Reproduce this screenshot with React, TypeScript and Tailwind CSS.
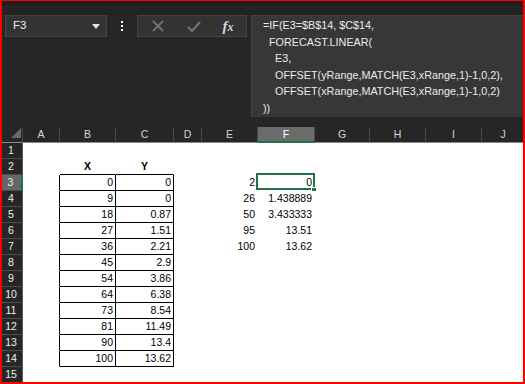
import React from "react";

const COLS = ["A", "B", "C", "D", "E", "F", "G", "H", "I", "J"];
const B = [0, 9, 18, 27, 36, 45, 54, 64, 73, 81, 90, 100];
const C = ["0", "0", "0.87", "1.51", "2.21", "2.9", "3.86", "6.38", "8.54", "11.49", "13.4", "13.62"];
const E = ["2", "26", "50", "95", "100"];
const F = ["0", "1.438889", "3.433333", "13.51", "13.62"];

function cellText(r: number, c: string): string {
  if (r === 2 && c === "B") return "X";
  if (r === 2 && c === "C") return "Y";
  if (r >= 3 && r <= 14 && c === "B") return String(B[r - 3]);
  if (r >= 3 && r <= 14 && c === "C") return C[r - 3];
  if (r >= 3 && r <= 7 && c === "E") return E[r - 3];
  if (r >= 3 && r <= 7 && c === "F") return F[r - 3];
  return "";
}

function Cell({ r, c }: { r: number; c: string }) {
  const inTable = r >= 3 && r <= 14;
  const rightBlack = inTable && (c === "A" || c === "B" || c === "C");
  const bottomBlack = r >= 2 && r <= 14 && (c === "B" || c === "C");
  const header = r === 2;
  const text = cellText(r, c);
  const selected = r === 3 && c === "F";
  return (
    <div
      className={
        "relative h-[16px] border-r border-b bg-white leading-[15px] text-[10.5px] text-black whitespace-nowrap " +
        (rightBlack ? "border-r-black " : "border-r-white ") +
        (bottomBlack ? "border-b-black " : "border-b-white ") +
        (header ? "text-center font-bold" : "text-right pr-[2px]")
      }
    >
      {text}
      {selected && (
        <>
          <div className="absolute left-[-2px] top-[-2px] w-[59px] h-[17px] border-2 border-[#217346] z-10" />
          <div className="absolute left-[53px] top-[12px] w-[6px] h-[5px] bg-[#217346] border border-white z-20" />
        </>
      )}
    </div>
  );
}

export default function App() {
  const rows = Array.from({ length: 15 }, (_, i) => i + 1);
  return (
    <div
      className="relative w-[525px] h-[384px] overflow-hidden bg-[#262626]"
      style={{ fontFamily: '"Liberation Sans", Arial, sans-serif' }}
    >
      {/* top band */}
      <div className="h-[5px] bg-[#1d1d1d]" />
      <div className="h-[10px] bg-[#232323]" />
      {/* formula bar row */}
      <div className="flex items-start h-[112px]">
        <div className="ml-[5px] w-[102px] h-[22px] bg-[#333333] border border-[#454545] flex items-center justify-between pl-[7px] pr-[6px]">
          <span className="text-[11.5px] text-[#ececec]">F3</span>
          <svg width="8" height="5" viewBox="0 0 8 5">
            <polygon points="0,0 8,0 4,5" fill="#e6e6e6" />
          </svg>
        </div>
        <div className="w-[30px] h-[22px] flex flex-col items-center justify-center gap-[2px]">
          <div className="w-[2px] h-[2px] bg-white" />
          <div className="w-[2px] h-[2px] bg-white" />
          <div className="w-[2px] h-[2px] bg-white" />
        </div>
        <div className="w-[110px] h-[22px] bg-[#333333] border border-[#454545] flex items-center">
          <div className="w-[38px] flex justify-center pl-[2px]">
            <svg width="12" height="12" viewBox="0 0 12 12">
              <path d="M1 1 L11 11 M11 1 L1 11" stroke="#737373" strokeWidth="1.8" fill="none" />
            </svg>
          </div>
          <div className="w-[36px] flex justify-center">
            <svg width="14" height="11" viewBox="0 0 14 11">
              <path d="M1 6 L5 10 L13 1" stroke="#737373" strokeWidth="2.2" fill="none" />
            </svg>
          </div>
          <div className="flex-1 flex justify-center pr-[2px]">
            <span
              className="italic font-bold text-[#d6d6d6] text-[15px] leading-none"
              style={{ fontFamily: '"Liberation Serif", "Times New Roman", serif' }}
            >
              f<span className="text-[12px]">x</span>
            </span>
          </div>
        </div>
        <div className="ml-[4px] flex-1 h-[102px] bg-[#373737] border-t border-l border-[#444444] pl-[11px] pt-[1px] text-[10.8px] leading-[16.6px] text-[#ebebeb] whitespace-nowrap">
          <div>=IF(E3=$B$14, $C$14,</div>
          <div className="pl-[6px]">FORECAST.LINEAR(</div>
          <div className="pl-[12px]">E3,</div>
          <div className="pl-[12px]">OFFSET(yRange,MATCH(E3,xRange,1)-1,0,2),</div>
          <div className="pl-[12px]">OFFSET(xRange,MATCH(E3,xRange,1)-1,0,2)</div>
          <div>))</div>
        </div>
      </div>
      {/* grid */}
      <div className="grid grid-cols-[23px_37px_56px_58px_28px_56px_57px_55px_56px_56px_1fr]">
        {/* header row */}
        <div className="relative h-[16px] border-r border-b border-r-[#4a4a4a] border-b-[#8a8a8a] bg-[#262626]">
          <svg className="absolute left-[11px] top-[1px]" width="10" height="10" viewBox="0 0 10 10">
            <polygon points="10,0 10,10 0,10" fill="#6a6a6a" />
          </svg>
        </div>
        {COLS.map((c) => (
          <div
            key={c}
            className={
              "h-[16px] border-r border-b border-r-[#4a4a4a] text-center text-[10.5px] leading-[15px] text-[#d6d6d6] " +
              (c === "F" ? "bg-[#6b6b6b] border-b-2 border-b-[#217346] text-white" : "bg-[#262626] border-b-[#8a8a8a]")
            }
          >
            {c}
          </div>
        ))}
        {rows.map((r) => (
          <React.Fragment key={r}>
            <div
              className={
                "h-[16px] border-b border-b-[#4e4e4e] text-center text-[10.5px] leading-[15px] text-[#ededed] " +
                (r === 3 ? "bg-[#666666] border-r-2 border-r-[#217346]" : "bg-[#262626] border-r border-r-[#5a5a5a]")
              }
            >
              {r}
            </div>
            {COLS.map((c) => (
              <Cell key={c} r={r} c={c} />
            ))}
          </React.Fragment>
        ))}
      </div>
      {/* screenshot frame */}
      <div className="pointer-events-none absolute inset-0 border-t border-l-2 border-r-2 border-b-2 border-[#ff0000] z-30" />
    </div>
  );
}
